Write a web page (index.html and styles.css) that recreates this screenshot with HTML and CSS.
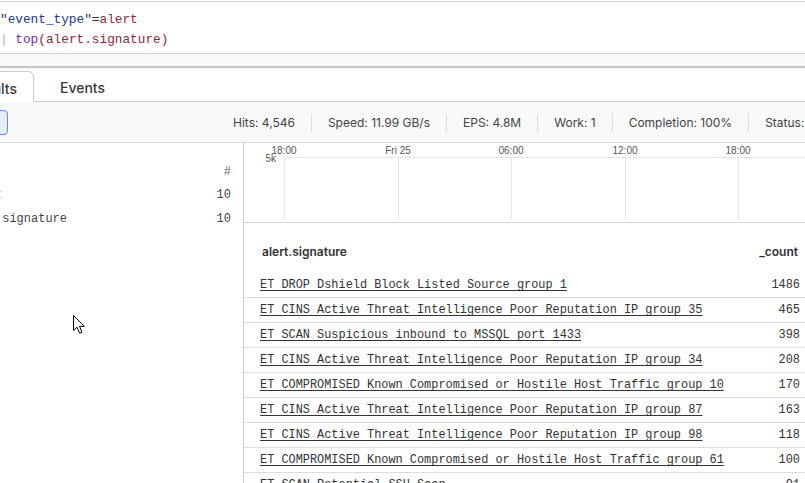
FILE: index.html
```html
<!DOCTYPE html>
<html>
<head>
<meta charset="utf-8">
<link rel="stylesheet" href="styles.css">
</head>
<body>
<div class="app">
  <div class="editor">
    <div class="qline"><span class="q-str">"event_type"</span><span class="q-op">=</span><span class="q-val">alert</span></div>
    <div class="qline"><span class="q-pipe">|</span> <span class="q-fn">top</span><span class="q-val">(alert.signature)</span></div>
  </div>
  <div class="strip"></div>
  <div class="tabs">
    <div class="tab active">Results</div>
    <div class="tab">Events</div>
  </div>
  <div class="toolbar">
    <div class="btn"></div>
    <div class="stats">
      <span class="stat">Hits: 4,546</span>
      <span class="stat">Speed: 11.99 GB/s</span>
      <span class="stat">EPS: 4.8M</span>
      <span class="stat">Work: 1</span>
      <span class="stat">Completion: 100%</span>
      <span class="stat">Status: Done</span>
    </div>
  </div>
  <div class="main">
    <div class="side">
      <div class="srow head"><span class="slabel faint">Field↓</span><span class="snum hash">#</span></div>
      <div class="srow"><span class="slabel faint">_count</span><span class="snum">10</span></div>
      <div class="srow"><span class="slabel">alert.signature</span><span class="snum">10</span></div>
    </div>
    <div class="content">
      <div class="chart">
        <svg width="561" height="79" viewBox="0 0 561 79">
          <line x1="40" y1="14.5" x2="561" y2="14.5" class="grid"/>
          <line x1="40.5" y1="14" x2="40.5" y2="76" class="grid"/>
          <line x1="154.5" y1="14" x2="154.5" y2="76" class="grid"/>
          <line x1="267.5" y1="14" x2="267.5" y2="76" class="grid"/>
          <line x1="381.5" y1="14" x2="381.5" y2="76" class="grid"/>
          <line x1="494.5" y1="14" x2="494.5" y2="76" class="grid"/>
          <text x="40" y="11" class="axis" text-anchor="middle">18:00</text>
          <text x="154" y="11" class="axis" text-anchor="middle">Fri 25</text>
          <text x="267" y="11" class="axis" text-anchor="middle">06:00</text>
          <text x="381" y="11" class="axis" text-anchor="middle">12:00</text>
          <text x="494" y="11" class="axis" text-anchor="middle">18:00</text>
          <text x="32" y="19" class="axis" text-anchor="end">5k</text>
        </svg>
      </div>
      <div class="table">
        <div class="thead"><span>alert.signature</span><span>_count</span></div>
        <div class="trow"><span class="sig">ET DROP Dshield Block Listed Source group 1</span><span class="cnt">1486</span></div>
        <div class="trow"><span class="sig">ET CINS Active Threat Intelligence Poor Reputation IP group 35</span><span class="cnt">465</span></div>
        <div class="trow"><span class="sig">ET SCAN Suspicious inbound to MSSQL port 1433</span><span class="cnt">398</span></div>
        <div class="trow"><span class="sig">ET CINS Active Threat Intelligence Poor Reputation IP group 34</span><span class="cnt">208</span></div>
        <div class="trow"><span class="sig">ET COMPROMISED Known Compromised or Hostile Host Traffic group 10</span><span class="cnt">170</span></div>
        <div class="trow"><span class="sig">ET CINS Active Threat Intelligence Poor Reputation IP group 87</span><span class="cnt">163</span></div>
        <div class="trow"><span class="sig">ET CINS Active Threat Intelligence Poor Reputation IP group 98</span><span class="cnt">118</span></div>
        <div class="trow"><span class="sig">ET COMPROMISED Known Compromised or Hostile Host Traffic group 61</span><span class="cnt">100</span></div>
        <div class="trow"><span class="sig">ET SCAN Potential SSH Scan</span><span class="cnt">91</span></div>
      </div>
    </div>
  </div>
</div>
<svg class="cursor" width="13" height="20" viewBox="0 0 13 20">
  <path d="M0.5 0.5 L0.5 15.5 L4 12.2 L6.6 18.3 L9 17.3 L6.5 11.3 L11.3 11.3 Z" fill="#fff" stroke="#000" stroke-width="1" stroke-linejoin="miter"/>
</svg>
</body>
</html>
```

FILE: styles.css
```css
html, body {
  margin: 0;
  padding: 0;
  background: #ffffff;
  overflow: hidden;
  width: 805px;
  height: 483px;
}
body {
  position: relative;
  font-family: Inter, "Liberation Sans", sans-serif;
  color: #333;
}
.app {
  display: flex;
  flex-direction: column;
  height: 483px;
}
.editor {
  margin-top: 1px;
  border-top: 1px solid #cfcfcf;
  border-bottom: 1px solid #cfcfcf;
  height: 51px;
  box-sizing: content-box;
  font-family: "Liberation Mono", monospace;
  font-size: 12.75px;
  line-height: 20px;
}
.editor .qline:first-child { margin-top: 8px; }
.qline { white-space: pre; margin-left: 0; }
.q-str { color: #23338a; }
.q-op { color: #333; }
.q-val { color: #8e2a37; }
.q-pipe { color: #9fb3d6; }
.q-fn { color: #6b34a8; }
.strip {
  height: 12px;
  background: #f8f8f8;
  border-bottom: 2px solid #c2c6ca;
  box-shadow: 0 1px 2px rgba(0,0,0,0.06);
}
.tabs {
  display: flex;
  align-items: flex-end;
  height: 33px;
  border-bottom: 1px solid #cccccc;
  margin-left: -49px;
  gap: 10px;
}
.tab {
  height: 30px;
  line-height: 30px;
  padding: 2px 16px 0;
  font-size: 14px;
  font-weight: 500;
  color: #3a3a3a;
  box-sizing: border-box;
}
.tab.active {
  border: 1px solid #cccccc;
  border-bottom: none;
  border-radius: 6px 6px 0 0;
  background: #ffffff;
  height: 31px;
  margin-bottom: -1px;
  padding-top: 2px;
}
.toolbar {
  display: flex;
  align-items: center;
  height: 40px;
  background: #f9f9f9;
  border-bottom: 1px solid #dadada;
}
.btn {
  width: 30px;
  height: 25px;
  box-sizing: border-box;
  margin-left: -22px;
  border: 1px solid #5b8ee6;
  border-radius: 4px;
  background: #e5eeff;
  flex: none;
}
.stats {
  display: flex;
  align-items: center;
  margin-left: 209px;
  padding-top: 1px;
  white-space: nowrap;
  font-size: 12px;
  color: #444;
}
.stat {
  padding: 0 16px;
  line-height: 18px;
  border-left: 1px solid #dddddd;
}
.stat:first-child { border-left: none; }
.main {
  display: flex;
  flex: 1;
  min-height: 0;
}
.side {
  width: 243px;
  flex: none;
  border-right: 1px solid #cccccc;
  padding-top: 17px;
  box-sizing: content-box;
  overflow: hidden;
  font-family: "Liberation Mono", monospace;
  font-size: 12px;
  color: #444;
}
.srow {
  display: flex;
  justify-content: space-between;
  align-items: center;
  height: 23.5px;
  padding-right: 12px;
}
.slabel { margin-left: -41px; white-space: nowrap; }
.faint { color: #b8b8b8; }
.hash { color: #666; }
.content {
  flex: 1;
  min-width: 0;
  overflow: hidden;
}
.chart {
  height: 79px;
  border-bottom: 1px solid #d4d4d4;
}
.chart svg { display: block; }
.grid { stroke: #e4e4e4; stroke-width: 1; }
.axis { font-family: "Liberation Sans", Arial, sans-serif; font-size: 10px; fill: #555; }
.table {
  padding-top: 18px;
}
.thead {
  display: flex;
  justify-content: space-between;
  padding: 0 7px 0 18px;
  height: 22px;
  line-height: 22px;
  margin-bottom: 10px;
  font-size: 12px;
  font-weight: 600;
  color: #333;
}
.trow {
  display: flex;
  justify-content: space-between;
  align-items: center;
  height: 24px;
  border-bottom: 1px solid #dcdcdc;
  padding: 0 5px 0 16px;
  font-family: "Liberation Mono", monospace;
  font-size: 11.9px;
  color: #333;
  white-space: nowrap;
}
.sig { text-decoration: underline; text-underline-offset: 2px; }
.cursor {
  position: absolute;
  left: 73px;
  top: 315px;
}
```
